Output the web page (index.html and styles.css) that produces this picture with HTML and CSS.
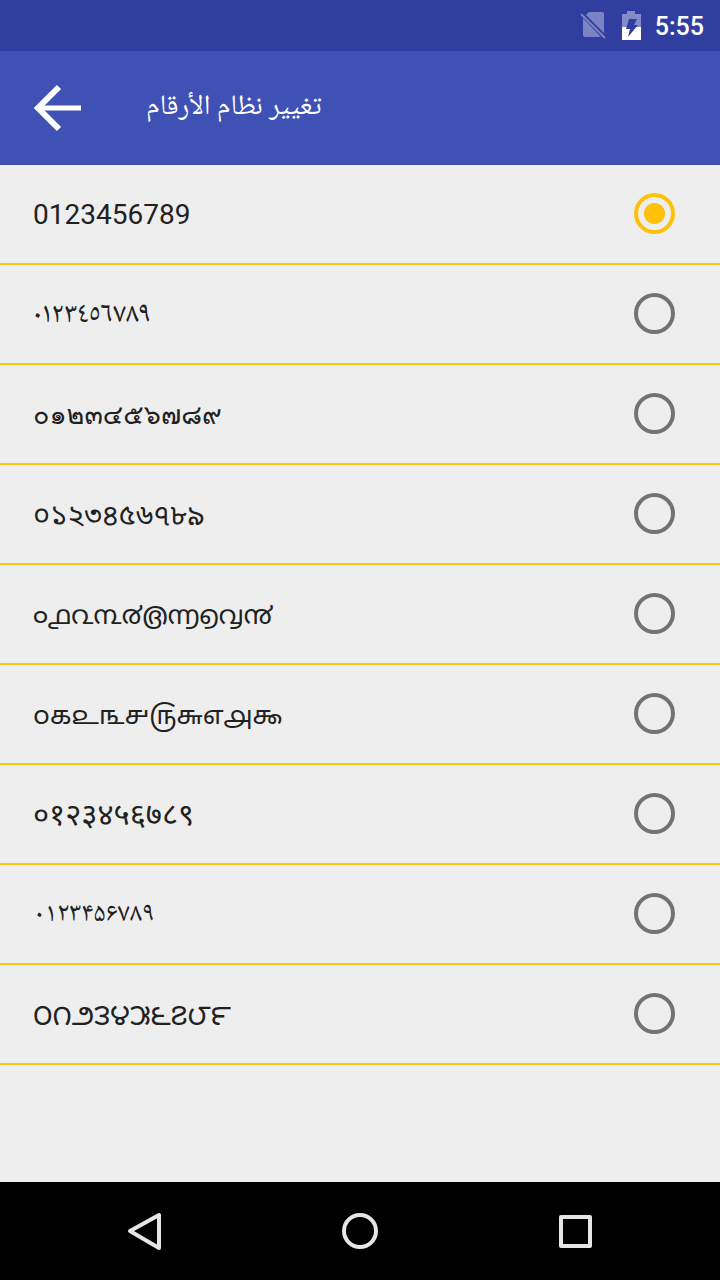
FILE: index.html
```
<!DOCTYPE html>
<html lang="ar">
<head>
    <meta charset="UTF-8">
    <meta name="viewport" content="width=device-width, initial-scale=1.0">
    <title>تغيير نظام الأرقام</title>
    <link rel="stylesheet" href="styles.css">
</head>
<body>
    <div class="status-bar">
        <svg class="status-icon" width="28" height="30" viewBox="0 0 28 30">
            <path d="M10 1h13q2 0 2 2v19L7 4zM4 7l18 19H6q-2 0-2-2z" fill="#7a84c4"/>
            <path d="M2 3l24 24" stroke="#7a84c4" stroke-width="2"/>
        </svg>
        <svg class="status-icon" width="20" height="30" viewBox="0 0 20 30">
            <path d="M1 3h5V0h8v3h6v13H1z" fill="#838cc8"/>
            <path d="M1 16h19v13H1z" fill="#fff"/>
            <path d="M8 8h8l-3 6h4L7 26l2-8H5z" fill="#303f9f"/>
        </svg>
        <span class="clock">5:55</span>
    </div>

    <header class="toolbar">
        <button class="back-btn" type="button" aria-label="رجوع">
            <svg width="50" height="50" viewBox="0 0 50 50" fill="none" stroke="#fff">
                <path d="M27 4L6 25l21 21" stroke-width="6"/>
                <path d="M6 25h43" stroke-width="5"/>
            </svg>
        </button>
        <h1 class="toolbar-title" dir="rtl">تغيير نظام الأرقام</h1>
    </header>

    <main class="number-list">
        <label class="number-row">
            <span class="digits">0123456789</span>
            <input class="radio" type="radio" name="numbers" checked>
        </label>
        <label class="number-row">
            <span class="digits digits-arabic">٠١٢٣٤٥٦٧٨٩</span>
            <input class="radio" type="radio" name="numbers">
        </label>
        <label class="number-row">
            <span class="digits digits-thai">๐๑๒๓๔๕๖๗๘๙</span>
            <input class="radio" type="radio" name="numbers">
        </label>
        <label class="number-row">
            <span class="digits digits-wide">০১২৩৪৫৬৭৮৯</span>
            <input class="radio" type="radio" name="numbers">
        </label>
        <label class="number-row">
            <span class="digits digits-small">൦൧൨൩൪൫൬൭൮൯</span>
            <input class="radio" type="radio" name="numbers">
        </label>
        <label class="number-row">
            <span class="digits digits-small">௦௧௨௩௪௫௬௭௮௯</span>
            <input class="radio" type="radio" name="numbers">
        </label>
        <label class="number-row">
            <span class="digits digits-hindi">०१२३४५६७८९</span>
            <input class="radio" type="radio" name="numbers">
        </label>
        <label class="number-row">
            <span class="digits digits-persian">۰۱۲۳۴۵۶۷۸۹</span>
            <input class="radio" type="radio" name="numbers">
        </label>
        <label class="number-row">
            <span class="digits digits-wide">౦౧౨౩౪౫౬౭౮౯</span>
            <input class="radio" type="radio" name="numbers">
        </label>
    </main>

    <nav class="nav-bar">
        <button class="nav-btn" type="button" aria-label="رجوع">
            <svg width="40" height="40" viewBox="0 0 40 40">
                <path d="M35 4v33L6 20z"/>
            </svg>
        </button>
        <button class="nav-btn" type="button" aria-label="الرئيسية">
            <svg width="40" height="40" viewBox="0 0 40 40">
                <circle cx="20" cy="20" r="16"/>
            </svg>
        </button>
        <button class="nav-btn" type="button" aria-label="التطبيقات">
            <svg width="40" height="40" viewBox="0 0 40 40">
                <rect x="5" y="6" width="29" height="29"/>
            </svg>
        </button>
    </nav>
</body>
</html>
```
FILE: styles.css
```
* {
    box-sizing: border-box;
}
body {
    margin: 0;
    min-height: 100vh;
    display: flex;
    flex-direction: column;
    background-color: #eeeeee;
    color: #212121;
    font-family: Roboto, "Noto Sans", "Noto Sans Bengali", "Noto Sans Malayalam", "Noto Sans Tamil", "Noto Sans Devanagari", "Noto Sans Telugu", sans-serif;
}
button {
    padding: 0;
    border: 0;
    background: none;
    cursor: pointer;
}
svg {
    display: block;
}
.status-bar {
    height: 51px;
    padding: 0 16px;
    display: flex;
    align-items: center;
    justify-content: flex-end;
    gap: 14px;
    background-color: #303f9f;
}
.clock {
    color: #fff;
    font-size: 25px;
    font-weight: 500;
    line-height: 32px;
    padding-top: 2px;
}
.toolbar {
    height: 114px;
    padding: 0 32px;
    display: flex;
    align-items: center;
    gap: 64px;
    background-color: #3f51b5;
}
.toolbar-title {
    margin: 0;
    color: #fff;
    font-family: "Noto Naskh Arabic", sans-serif;
    font-size: 28px;
    font-weight: 400;
    line-height: 40px;
}
.number-list {
    flex: 1;
}
.number-row {
    height: 100px;
    padding: 0 45px 2px 33px;
    display: flex;
    align-items: center;
    justify-content: space-between;
    border-bottom: 2px solid #f9c80e;
    cursor: pointer;
}
.digits {
    font-size: 28px;
    line-height: 40px;
    padding-top: 4px;
}
.digits-small {
    font-size: 26px;
}
.digits-wide {
    font-size: 29px;
}
.digits-hindi {
    font-size: 31px;
}
.digits-thai {
    font-family: Loma, sans-serif;
    font-size: 27px;
}
.digits-arabic {
    font-family: "Noto Naskh Arabic UI", "Noto Naskh Arabic", sans-serif;
    font-size: 29px;
}
.digits-persian {
    font-family: "Noto Naskh Arabic", sans-serif;
    font-size: 27px;
}
.radio {
    appearance: none;
    width: 41px;
    height: 41px;
    margin: 0;
    border: 4px solid #737373;
    border-radius: 50%;
}
.radio:checked {
    border-color: #ffc107;
    background: radial-gradient(circle, #ffc107 10px, transparent 11px);
}
.nav-bar {
    height: 98px;
    padding: 0 36px;
    display: flex;
    background-color: #000;
}
.nav-btn {
    flex: 1;
    display: flex;
    align-items: center;
    justify-content: center;
}
.nav-btn svg {
    fill: none;
    stroke: #e6e6e6;
    stroke-width: 4;
    stroke-linejoin: round;
}
```
